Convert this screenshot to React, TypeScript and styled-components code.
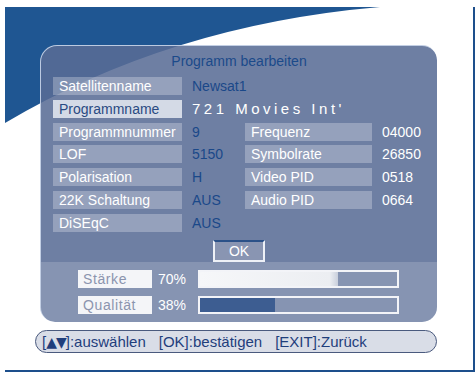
import React from 'react';
import styled, { createGlobalStyle } from 'styled-components';

const GlobalStyle = createGlobalStyle`
  html, body {
    margin: 0;
    padding: 0;
    background: #ffffff;
  }
  body {
    font-family: "Liberation Sans", Arial, sans-serif;
  }
`;

const Screen = styled.div`
  width: 476px;
  height: 373px;
  box-sizing: border-box;
  padding: 7px 1px 1px 5px;
  background: #ffffff;
  overflow: hidden;
`;

const Frame = styled.div`
  position: relative;
  width: 470px;
  height: 365px;
  box-sizing: border-box;
  border-right: 2px solid #1d4f8c;
  border-bottom: 2px solid #1d4f8c;
  padding: 38px 0 0 35px;
  display: flex;
  flex-direction: column;
`;

const Wave = styled.svg`
  position: absolute;
  left: 0;
  top: 0;
`;

const Panel = styled.div`
  position: relative;
  width: 397px;
  height: 277px;
  box-sizing: border-box;
  border-radius: 17px 15px 15px 15px;
  border-top: 1px solid rgba(225, 235, 250, 0.75);
  border-left: 1px solid rgba(225, 235, 250, 0.75);
  background: rgba(89, 108, 149, 0.87);
  overflow: hidden;
  display: flex;
  flex-direction: column;
`;

const Title = styled.div`
  height: 30px;
  line-height: 30px;
  margin-bottom: 1px;
  text-align: center;
  font-size: 14px;
  color: #1b4a8a;
`;

const Grid = styled.div`
  margin-left: 12px;
  display: grid;
  grid-template-columns: 129px 43px 127px 1fr;
  column-gap: 10px;
  grid-auto-rows: 18px;
  row-gap: 4.8px;
`;

const Label = styled.div<{ $active?: boolean }>`
  box-sizing: border-box;
  padding-left: 6px;
  line-height: 18px;
  font-size: 14px;
  white-space: nowrap;
  color: ${p => (p.$active ? '#2a4a82' : '#ffffff')};
  background: ${p => (p.$active ? '#d4dae6' : 'rgba(255, 255, 255, 0.27)')};
`;

const Value = styled.div<{ $light?: boolean; $wide?: boolean; $spaced?: boolean }>`
  line-height: 18px;
  font-size: ${p => (p.$spaced ? '15px' : '14px')};
  white-space: nowrap;
  color: ${p => (p.$light ? '#ffffff' : '#1a4889')};
  grid-column: ${p => (p.$wide ? 'span 3' : 'auto')};
  letter-spacing: ${p => (p.$spaced ? '3.5px' : '0')};
`;

const OkButton = styled.div`
  align-self: center;
  margin-top: 8px;
  width: 52px;
  height: 22px;
  box-sizing: border-box;
  border: 2px solid #eef1f7;
  border-top-color: #2b5188;
  background: #8995b2;
  color: #ffffff;
  font-size: 14px;
  line-height: 18px;
  text-align: center;
`;

const Signal = styled.div`
  flex: 1;
  background: rgba(255, 255, 255, 0.17);
  padding: 8px 0 0 37px;
  display: flex;
  flex-direction: column;
  gap: 8px;
`;

const MeterRow = styled.div`
  display: flex;
  align-items: center;
  height: 18px;
`;

const MeterLabel = styled.div`
  width: 74px;
  height: 18px;
  box-sizing: border-box;
  padding-left: 5px;
  background: #f4f5f8;
  color: #8b94ae;
  font-size: 14px;
  line-height: 18px;
  letter-spacing: 0.6px;
`;

const Percent = styled.div`
  width: 40px;
  margin-left: 6px;
  color: #ffffff;
  font-size: 14px;
  line-height: 18px;
`;

const Bar = styled.div`
  width: 201px;
  height: 18px;
  box-sizing: border-box;
  border: 2px solid #f3f4f8;
`;

const Fill = styled.div<{ $tone: 'light' | 'dark' }>`
  height: 100%;
  background: ${p =>
    p.$tone === 'light'
      ? 'linear-gradient(to right, #f6f7f9 0%, #eceef2 94%, #c9cfdc 100%)'
      : '#3d5d91'};
`;

const Footer = styled.div`
  margin-top: 8px;
  margin-left: -5px;
  width: 402px;
  height: 23px;
  box-sizing: border-box;
  border: 1.5px solid #4a5a7e;
  border-radius: 12px;
  background: #d9dde7;
  padding-left: 6px;
  display: flex;
  align-items: center;
  gap: 13px;
  color: #1f3e7c;
  font-size: 15px;
`;

const Hint = styled.span`
  white-space: nowrap;
`;

const Arrows = styled.span`
  font-family: "DejaVu Sans", sans-serif;
  font-size: 14px;
  letter-spacing: -1px;
  vertical-align: 0px;
`;

const rows: { label: string; value: string; label2?: string; value2?: string; active?: boolean; spaced?: boolean }[] = [
  { label: 'Satellitenname', value: 'Newsat1' },
  { label: 'Programmname', value: "721 Movies Int'", active: true, spaced: true },
  { label: 'Programmnummer', value: '9', label2: 'Frequenz', value2: '04000' },
  { label: 'LOF', value: '5150', label2: 'Symbolrate', value2: '26850' },
  { label: 'Polarisation', value: 'H', label2: 'Video PID', value2: '0518' },
  { label: '22K Schaltung', value: 'AUS', label2: 'Audio PID', value2: '0664' },
  { label: 'DiSEqC', value: 'AUS' },
];

export default function App() {
  return (
    <Screen>
      <GlobalStyle />
      <Frame>
        <Wave width="380" height="120" viewBox="0 0 380 120">
          <path d="M0,0 H375 Q165,18 0,116 Z" fill="#1f5692" />
        </Wave>
        <Panel>
          <Title>Programm bearbeiten</Title>
          <Grid>
            {rows.map(r => (
              <React.Fragment key={r.label}>
                <Label $active={r.active}>{r.label}</Label>
                {r.label2 ? (
                  <>
                    <Value>{r.value}</Value>
                    <Label>{r.label2}</Label>
                    <Value $light>{r.value2}</Value>
                  </>
                ) : (
                  <Value $wide $light={r.spaced} $spaced={r.spaced}>
                    {r.value}
                  </Value>
                )}
              </React.Fragment>
            ))}
          </Grid>
          <OkButton>OK</OkButton>
          <Signal>
            <MeterRow>
              <MeterLabel>Stärke</MeterLabel>
              <Percent>70%</Percent>
              <Bar>
                <Fill $tone="light" style={{ width: '70%' }} />
              </Bar>
            </MeterRow>
            <MeterRow>
              <MeterLabel>Qualität</MeterLabel>
              <Percent>38%</Percent>
              <Bar>
                <Fill $tone="dark" style={{ width: '38%' }} />
              </Bar>
            </MeterRow>
          </Signal>
        </Panel>
        <Footer>
          <Hint>
            [<Arrows>▲▼</Arrows>]:auswählen
          </Hint>
          <Hint>[OK]:bestätigen</Hint>
          <Hint>[EXIT]:Zurück</Hint>
        </Footer>
      </Frame>
    </Screen>
  );
}
